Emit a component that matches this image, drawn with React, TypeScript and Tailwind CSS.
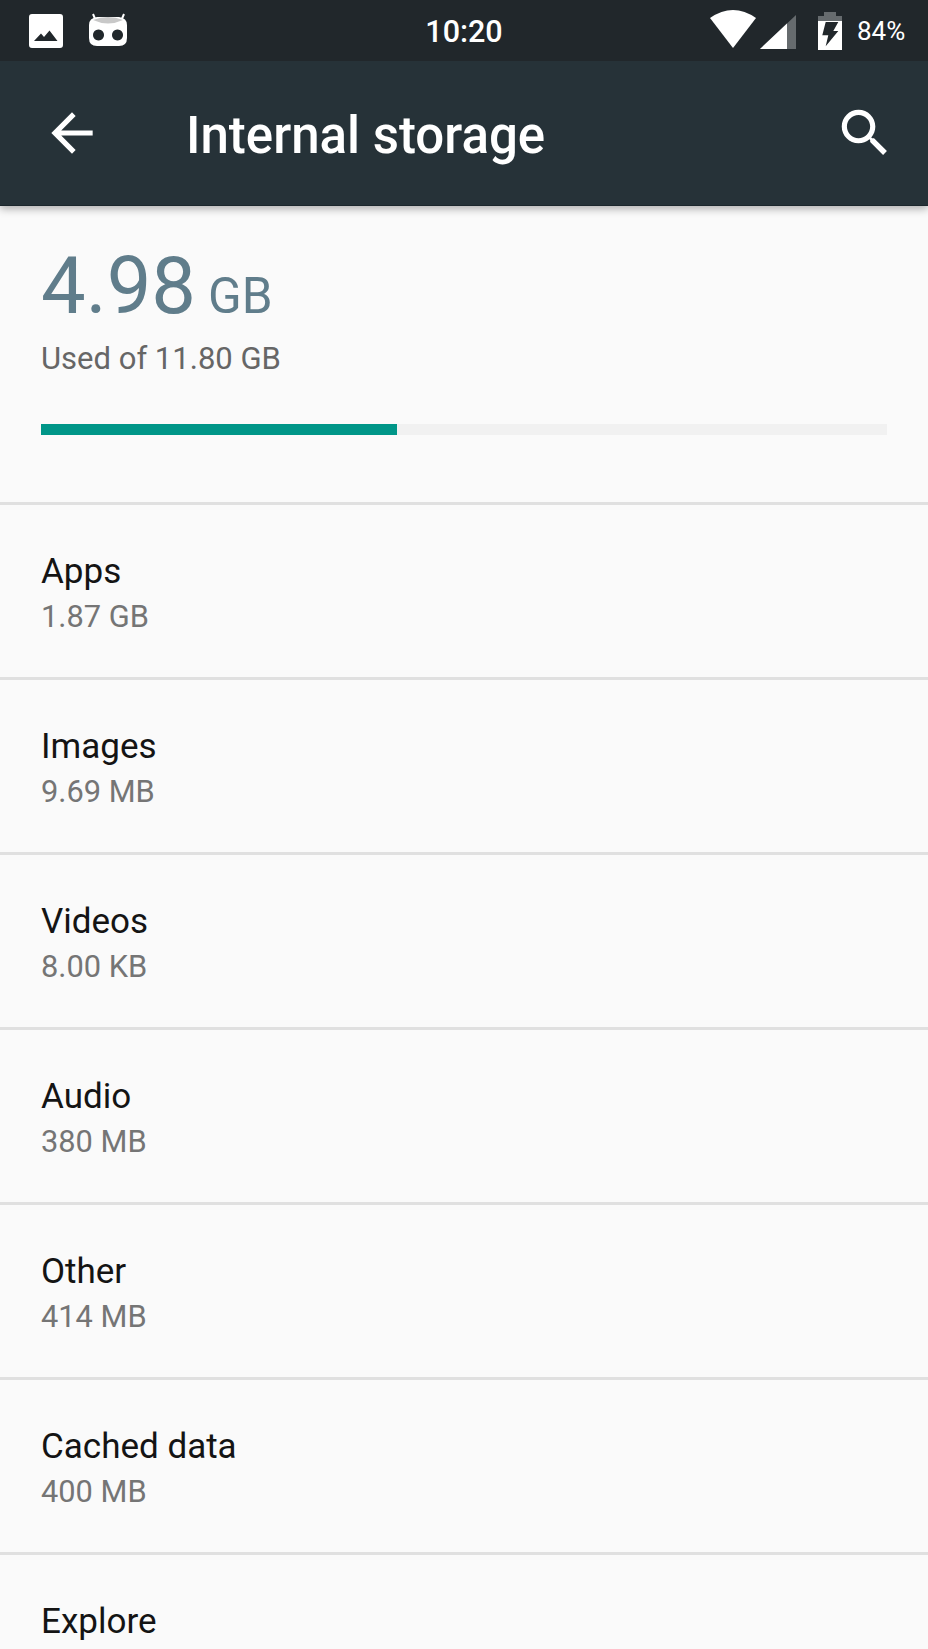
const rows = [
  { name: "Apps", size: "1.87 GB" },
  { name: "Images", size: "9.69 MB" },
  { name: "Videos", size: "8.00 KB" },
  { name: "Audio", size: "380 MB" },
  { name: "Other", size: "414 MB" },
  { name: "Cached data", size: "400 MB" },
  { name: "Explore", size: "" },
];

function Row({ name, size }: { name: string; size: string }) {
  return (
    <li className="h-[175px] border-t-[3px] border-[#e0e0e0] pl-[41px] pt-[44px]">
      <p className="text-[35px] leading-[46px] text-[#141414]">{name}</p>
      {size && <p className="text-[30.8px] leading-[44px] text-[#757575]">{size}</p>}
    </li>
  );
}

export default function App() {
  return (
    <div className="h-[1649px] w-[928px] overflow-hidden bg-[#fafafa] font-['Roboto',sans-serif]">
      <header className="relative z-10 shadow-[0_3px_8px_rgba(0,0,0,0.3)]">
        <div className="flex h-[61px] items-center bg-[#21272b] pl-[29px]">
          <svg width="34" height="34" viewBox="0 0 34 34">
            <path fillRule="evenodd" fill="#fff" d="M3 0H31Q34 0 34 3V31Q34 34 31 34H3Q0 34 0 31V3Q0 0 3 0ZM5 27H28.5L20.5 16.5 15 23 12 19.5Z" />
          </svg>
          <svg width="38" height="36" viewBox="0 0 38 36" className="ml-[26px]">
            <path d="M4 1 L7 8 M35 1 L32 8" stroke="#fff" strokeWidth="2" />
            <path fill="#fff" fillRule="evenodd" d="M8 4H30Q38 5 38 12V25Q38 33 30 33H8Q0 33 0 25V12Q0 5 8 4ZM9.5 16.5a5.5 5.5 0 1 0 .01 0ZM28.5 16.5a5.5 5.5 0 1 0 .01 0Z" />
            <path d="M4 7Q19 1 34 7 Q19 14 4 7Z" fill="#c8c8c8" />
          </svg>
          <span className="ml-[298px] w-[78px] pt-[3px] text-center text-[30.5px] font-medium text-white">10:20</span>
          <svg width="48" height="38" viewBox="0 0 48 38" className="mb-[3px] ml-[206px]">
            <path d="M1 8 Q24 -8 47 8 L24 38 Z" fill="#fff" />
          </svg>
          <svg width="36" height="36" viewBox="0 0 36 36" className="ml-[3px]">
            <path d="M0 36 L36 2 V36 Z" fill="#666b6e" />
            <path d="M0 36 L27 10.5 V36 Z" fill="#fff" />
          </svg>
          <svg width="24" height="38" viewBox="0 0 24 38" className="ml-[22px]">
            <path d="M6 0H18V4H24V9H0V4H6Z" fill="#666b6e" />
            <path fillRule="evenodd" fill="#fff" d="M0 9H24V38H0ZM7.7 10H20.3L15.3 19H20.3L7.7 34.3 10.3 23.3H4.3Z" />
          </svg>
          <span className="ml-[15px] pt-[2px] text-[26px] text-white">84%</span>
        </div>
        <div className="flex h-[145px] items-center border-b border-[#1c272d] bg-[#263238] pl-[41px] pr-[32px]">
          <svg width="62" height="62" viewBox="0 0 24 24" fill="#fff">
            <path d="M20 11H7.83l5.59-5.59L12 4l-8 8 8 8 1.41-1.41L7.83 13H20v-2z" />
          </svg>
          <h1 className="ml-[83px] mt-[6px] text-[51px] font-medium leading-[60px] text-white">Internal storage</h1>
          <svg width="62" height="62" viewBox="0 0 24 24" fill="#fff" className="ml-auto">
            <path d="M15.5 14h-.79l-.28-.27C15.41 12.59 16 11.11 16 9.5 16 5.91 13.09 3 9.5 3S3 5.91 3 9.5 5.91 16 9.5 16c1.61 0 3.09-.59 4.23-1.57l.27.28v.79l5 4.99L20.49 19l-4.99-5zm-6 0C7.01 14 5 11.99 5 9.5S7.01 5 9.5 5 14 7.01 14 9.5 11.99 14 9.5 14z" />
          </svg>
        </div>
      </header>
      <main>
        <section className="h-[296px] px-[41px] pt-[35px]">
          <p className="flex items-baseline text-[#607d8b]">
            <span className="text-[79.5px] leading-[90px]">4.98</span>
            <span className="ml-[12px] text-[49.5px] leading-[90px]">GB</span>
          </p>
          <p className="-mt-[2px] text-[31px] leading-[40px] text-[#666]">Used of 11.80 GB</p>
          <div className="mt-[45px] h-[11px] bg-[#f1f1f1]">
            <div className="h-full w-[356px] bg-[#009688]" />
          </div>
        </section>
        <ul>
          {rows.map((r) => (
            <Row key={r.name} name={r.name} size={r.size} />
          ))}
        </ul>
      </main>
    </div>
  );
}
